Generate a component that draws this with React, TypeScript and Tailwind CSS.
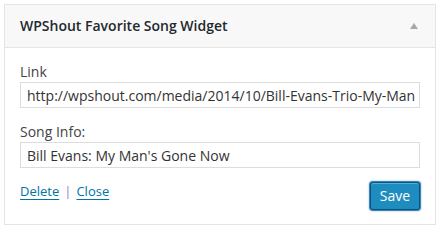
export default function App() {
  return (
    <div className="w-[443px] h-[236px] bg-white pt-[4px] pl-[4px]" style={{ fontFamily: '"Open Sans", "Liberation Sans", sans-serif' }}>
      <div className="w-[432px] border border-[#e5e5e5] bg-white">
        <div className="h-[43px] bg-[#f8f8f8] border-b border-[#e5e5e5] flex items-center justify-between pl-[15px] pr-[17px]">
          <span className="text-[14px] leading-[20px] font-semibold text-[#23282d]">WPShout Favorite Song Widget</span>
          <span className="w-0 h-0 border-l-[4px] border-r-[4px] border-b-[6px] border-l-transparent border-r-transparent border-b-[#a8a8a8]" />
        </div>
        <div className="px-[15px] pt-[14px] pb-[14px]">
          <div className="text-[14px] leading-[20px] text-[#444]">Link</div>
          <div className="h-[26px] w-[400px] border border-[#dddddd] px-[6px] flex items-center text-[14px] text-[#333] whitespace-nowrap overflow-hidden">
            http://wpshout.com/media/2014/10/Bill-Evans-Trio-My-Man
          </div>
          <div className="mt-[14px] text-[14px] leading-[20px] text-[#444]">Song Info:</div>
          <div className="h-[26px] w-[400px] border border-[#dddddd] px-[6px] flex items-center text-[14px] text-[#333] whitespace-nowrap overflow-hidden">
            Bill Evans: My Man's Gone Now
          </div>
          <div className="mt-[12px] flex justify-between items-start">
            <div className="text-[13px] leading-[20px] text-[#0074a2] pt-[1px]">
              <span className="underline underline-offset-[3px]">Delete</span>
              <span className="text-[#8e85b5] mx-[5px]">|</span>
              <span className="underline underline-offset-[3px]">Close</span>
            </div>
            <button className="mt-[2px] w-[50px] h-[28px] rounded-[3px] bg-[#1e8cbe] border border-[#005684] text-white text-[14px] leading-none shadow-[inset_0_1px_0_rgba(120,200,230,0.6),0_0_0_1px_#4a7fb0,0_0_2px_1px_rgba(30,140,190,0.6)]">
              Save
            </button>
          </div>
        </div>
      </div>
    </div>
  );
}
